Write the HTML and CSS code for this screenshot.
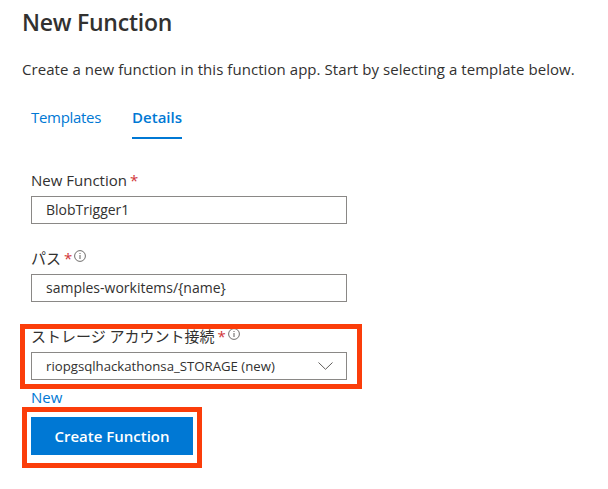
FILE: index.html
```html
<!DOCTYPE html>
<html lang="ja">
<head>
<meta charset="utf-8">
<link rel="stylesheet" href="styles.css">
</head>
<body>
<div class="page">
  <h1 class="title">New Function</h1>
  <p class="desc">Create a new function in this function app. Start by selecting a template below.</p>
  <div class="tabs">
    <span class="tab">Templates</span>
    <span class="tab active">Details</span>
  </div>
  <div class="form">
    <div class="field">
      <div class="label">New Function<span class="req">*</span></div>
      <div class="input">BlobTrigger1</div>
    </div>
    <div class="field">
      <div class="label">パス<span class="req">*</span><svg class="info" width="12" height="12" viewBox="0 0 12 12"><circle cx="6" cy="6" r="5.4" fill="none" stroke="#605e5c" stroke-width="0.9"/><rect x="5.5" y="5" width="1" height="4" fill="#605e5c"/><rect x="5.5" y="3" width="1" height="1" fill="#605e5c"/></svg></div>
      <div class="input">samples-workitems/{name}</div>
    </div>
    <div class="field marked">
      <div class="label">ストレージ アカウント接続<span class="req">*</span><svg class="info" width="12" height="12" viewBox="0 0 12 12"><circle cx="6" cy="6" r="5.4" fill="none" stroke="#605e5c" stroke-width="0.9"/><rect x="5.5" y="5" width="1" height="4" fill="#605e5c"/><rect x="5.5" y="3" width="1" height="1" fill="#605e5c"/></svg></div>
      <div class="input select"><span>riopgsqlhackathonsa_STORAGE (new)</span><svg class="chev" width="15" height="8" viewBox="0 0 15 8"><path d="M0.5 0.5 L7.5 7.3 L14.5 0.5" fill="none" stroke="#605e5c" stroke-width="1"/></svg></div>
    </div>
    <a class="link">New</a>
    <div class="btn-wrap">
      <button class="btn">Create Function</button>
    </div>
  </div>
</div>
</body>
</html>
```
FILE: styles.css
```css
* { box-sizing: border-box; }
body {
  margin: 0;
  background: #fff;
  font-family: "Open Sans", "Noto Sans CJK JP", sans-serif;
  color: #323130;
}
.page { padding: 0 22px; }
.title {
  margin: 6px 0 0;
  font-size: 23px;
  line-height: 32px;
  font-weight: 600;
  letter-spacing: -0.25px;
  color: #323130;
}
.desc {
  margin: 21px 0 0;
  font-size: 15px;
  line-height: 20px;
  letter-spacing: 0.06px;
}
.tabs {
  margin-top: 28px;
  padding-left: 9px;
  display: flex;
  gap: 31px;
}
.tab {
  font-size: 15px;
  line-height: 20px;
  color: #0078d4;
  padding-bottom: 10px;
  border-bottom: 2px solid transparent;
}
.tab:first-child { letter-spacing: -0.3px; }
.tab.active { font-weight: 600; border-bottom-color: #0078d4; }
.form {
  padding-left: 9px;
  margin-top: 31px;
  display: flex;
  flex-direction: column;
  align-items: flex-start;
}
.field { width: 316px; margin-bottom: 24px; position: relative; }
.label {
  font-size: 15px;
  line-height: 20px;
  height: 20px;
  display: flex;
  align-items: flex-start;
  color: #323130;
}
.req { color: #d13438; margin-left: 3px; }
.info { margin-left: 2px; margin-top: 2px; }
.input {
  margin-top: 6px;
  height: 28px;
  border: 1px solid #8a8886;
  padding: 0 14px;
  font-size: 14px;
  line-height: 26px;
  color: #323130;
}
.select {
  display: flex;
  justify-content: space-between;
  align-items: center;
  font-size: 13.2px;
  padding-right: 13px;
}
.chev { display: block; }
.marked { margin-bottom: 7px; }
.marked::after {
  content: "";
  position: absolute;
  top: -2px;
  left: -11px;
  right: -15px;
  bottom: -9px;
  border: 5px solid #fb3d0a;
}
.link {
  font-size: 15px;
  line-height: 20px;
  color: #0078d4;
}
.btn-wrap {
  margin-left: -9px;
  border: 5px solid #fb3d0a;
  padding: 5px 4px 8px;
}
.btn {
  display: block;
  width: 162px;
  height: 38px;
  border: 0;
  background: #0078d4;
  color: #fff;
  font-family: "Open Sans", sans-serif;
  font-size: 15px;
  font-weight: 600;
  padding: 0;
}
```
